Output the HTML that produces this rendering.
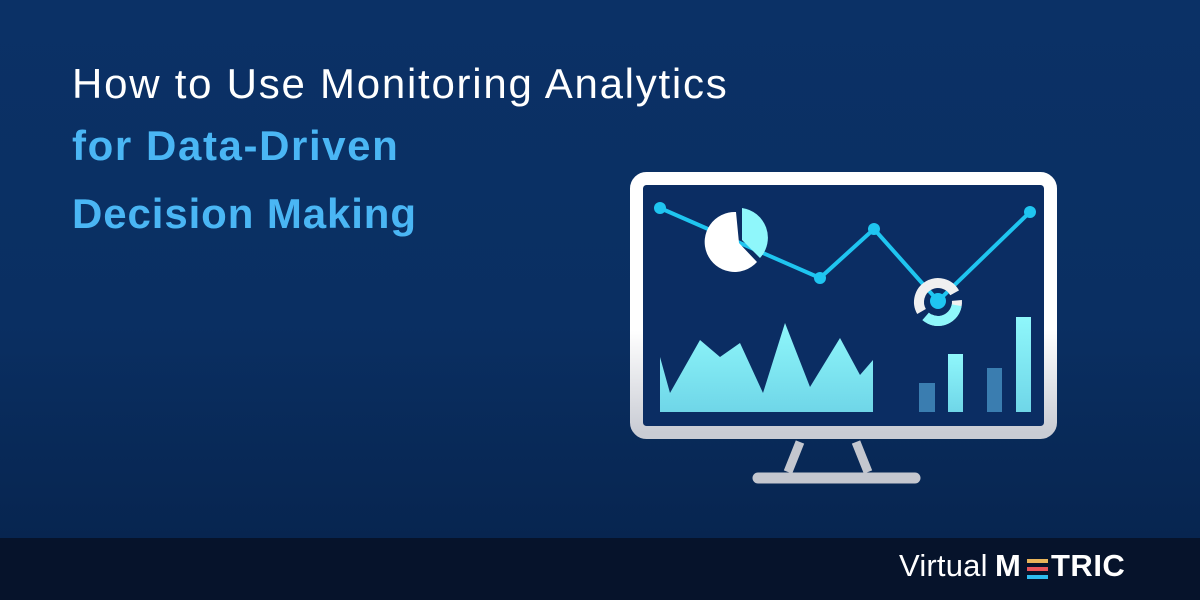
<!DOCTYPE html>
<html><head><style>
body{margin:0;width:1200px;height:600px;overflow:hidden;font-family:"Liberation Sans",sans-serif;}
.bg{position:absolute;left:0;top:0;width:1200px;height:538px;background:linear-gradient(180deg,#0b3166 0%,#0a2f62 60%,#072550 100%);}
.foot{position:absolute;left:0;top:538px;width:1200px;height:62px;background:#06132b;}
.t{position:absolute;left:72px;white-space:nowrap;font-size:42px;}
.t1{top:60px;color:#fff;letter-spacing:1.75px;}
.t2{top:122px;color:#4ab6f4;font-weight:bold;letter-spacing:1.6px;}
.t3{top:190px;color:#4ab6f4;font-weight:bold;letter-spacing:0.9px;}
.l{position:absolute;top:548px;font-size:31px;color:#fff;white-space:nowrap;}
</style></head><body>
<div class="bg"></div><div class="foot"></div>
<div class="t t1">How to Use Monitoring Analytics</div>
<div class="t t2">for Data-Driven</div>
<div class="t t3">Decision Making</div>
<svg style="position:absolute;left:0;top:0" width="1200" height="600">
<defs><linearGradient id="g" x1="0" y1="0" x2="0" y2="1"><stop offset="0" stop-color="#8ff7fb"/><stop offset="1" stop-color="#6fd6e8"/></linearGradient>
<linearGradient id="w" x1="0" y1="0" x2="0" y2="1"><stop offset="0.6" stop-color="#fff"/><stop offset="1" stop-color="#c9ccd4"/></linearGradient></defs>
<rect x="636.5" y="178.5" width="414" height="254" rx="10" fill="#0b2d63" stroke="url(#w)" stroke-width="13"/>
<path d="M800 442 L788 472 M856 442 L868 472" stroke="#c4c7cf" stroke-width="9"/>
<line x1="758" y1="478" x2="915" y2="478" stroke="#c4c7cf" stroke-width="11" stroke-linecap="round"/>
<path d="M660 357 L670 393 L700 340 L720 357 L740 343 L763 393 L785 323 L810 387 L840 338 L860 375 L873 360 L873 412 L660 412Z" fill="url(#g)"/>
<rect x="919" y="383" width="16" height="29" fill="#3a7db0"/>
<rect x="948" y="354" width="15" height="58" fill="url(#g)"/>
<rect x="987" y="368" width="15" height="44" fill="#3a7db0"/>
<rect x="1016" y="317" width="15" height="95" fill="url(#g)"/>
<path d="M660 208 L820 278 L874 229 L938 301 L1030 212" fill="none" stroke="#1fc5f0" stroke-width="4"/>
<path d="M739 243 L757 262 A30 30 0 1 1 736 212 Z" fill="#fff"/>
<path d="M742 208 A30 30 0 0 1 760 258 L742 240 Z" fill="#8ff7fb"/>
<circle cx="938" cy="302" r="19" fill="none" stroke="#f0f0f0" stroke-width="10" stroke-dasharray="60 8 40 200" transform="rotate(150 938 302)"/>
<circle cx="938" cy="302" r="19" fill="none" stroke="#8ff7fb" stroke-width="10" stroke-dasharray="40 200" transform="rotate(10 938 302)"/>
<circle cx="660" cy="208" r="6" fill="#1fc5f0"/><circle cx="820" cy="278" r="6" fill="#1fc5f0"/>
<circle cx="874" cy="229" r="6" fill="#1fc5f0"/><circle cx="938" cy="301" r="8" fill="#1fc5f0"/>
<circle cx="1030" cy="212" r="6" fill="#1fc5f0"/>
<rect x="1027" y="559" width="21" height="4" fill="#e8b45a"/>
<rect x="1027" y="567" width="21" height="4" fill="#e8545a"/>
<rect x="1027" y="575" width="21" height="4" fill="#2ebcf0"/>
</svg>
<div class="l" style="left:899px;letter-spacing:0.2px">Virtual</div>
<div class="l" style="left:995px;font-weight:bold">M</div>
<div class="l" style="left:1051px;font-weight:bold;letter-spacing:0.5px">TRIC</div>
</body></html>
